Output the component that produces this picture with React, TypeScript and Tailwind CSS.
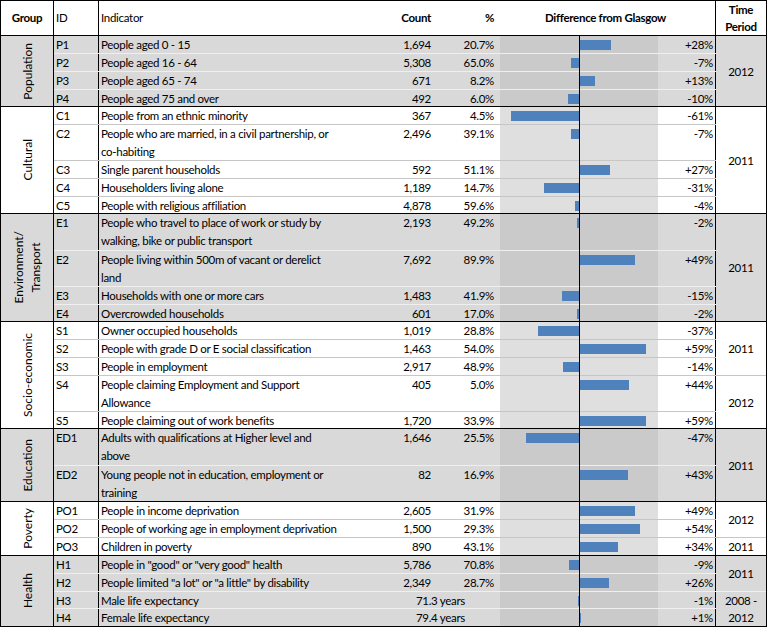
import React from "react";

type Row = {
  id: string;
  lines: string[];
  count?: string;
  pct?: string;
  combined?: string;
  diff: number;
  h: string;
};
type Sub = { time: string[]; rows: Row[] };
type Group = { label: string[]; grey: boolean; subs: Sub[] };

const groups: Group[] = [
  {
    label: ["Population"],
    grey: true,
    subs: [
      {
        time: ["2012"],
        rows: [
          { id: "P1", lines: ["People aged 0 - 15"], count: "1,694", pct: "20.7%", diff: 28, h: "h-[18px]" },
          { id: "P2", lines: ["People aged 16 - 64"], count: "5,308", pct: "65.0%", diff: -7, h: "h-[18px]" },
          { id: "P3", lines: ["People aged 65 - 74"], count: "671", pct: "8.2%", diff: 13, h: "h-[18px]" },
          { id: "P4", lines: ["People aged 75 and over"], count: "492", pct: "6.0%", diff: -10, h: "h-[17px]" },
        ],
      },
    ],
  },
  {
    label: ["Cultural"],
    grey: false,
    subs: [
      {
        time: ["2011"],
        rows: [
          { id: "C1", lines: ["People from an ethnic minority"], count: "367", pct: "4.5%", diff: -61, h: "h-[18px]" },
          { id: "C2", lines: ["People who are married, in a civil partnership, or", "co-habiting"], count: "2,496", pct: "39.1%", diff: -7, h: "h-[36px]" },
          { id: "C3", lines: ["Single parent households"], count: "592", pct: "51.1%", diff: 27, h: "h-[18px]" },
          { id: "C4", lines: ["Householders living alone"], count: "1,189", pct: "14.7%", diff: -31, h: "h-[18px]" },
          { id: "C5", lines: ["People with religious affiliation"], count: "4,878", pct: "59.6%", diff: -4, h: "h-[17px]" },
        ],
      },
    ],
  },
  {
    label: ["Environment/", "Transport"],
    grey: true,
    subs: [
      {
        time: ["2011"],
        rows: [
          { id: "E1", lines: ["People who travel to place of work or study by", "walking, bike or public transport"], count: "2,193", pct: "49.2%", diff: -2, h: "h-[37px]" },
          { id: "E2", lines: ["People living within 500m of vacant or derelict", "land"], count: "7,692", pct: "89.9%", diff: 49, h: "h-[36px]" },
          { id: "E3", lines: ["Households with one or more cars"], count: "1,483", pct: "41.9%", diff: -15, h: "h-[18px]" },
          { id: "E4", lines: ["Overcrowded households"], count: "601", pct: "17.0%", diff: -2, h: "h-[17px]" },
        ],
      },
    ],
  },
  {
    label: ["Socio-economic"],
    grey: false,
    subs: [
      {
        time: ["2011"],
        rows: [
          { id: "S1", lines: ["Owner occupied households"], count: "1,019", pct: "28.8%", diff: -37, h: "h-[18px]" },
          { id: "S2", lines: ["People with grade D or E social classification"], count: "1,463", pct: "54.0%", diff: 59, h: "h-[18px]" },
          { id: "S3", lines: ["People in employment"], count: "2,917", pct: "48.9%", diff: -14, h: "h-[18px]" },
        ],
      },
      {
        time: ["2012"],
        rows: [
          { id: "S4", lines: ["People claiming Employment and Support", "Allowance"], count: "405", pct: "5.0%", diff: 44, h: "h-[36px]" },
          { id: "S5", lines: ["People claiming out of work benefits"], count: "1,720", pct: "33.9%", diff: 59, h: "h-[17px]" },
        ],
      },
    ],
  },
  {
    label: ["Education"],
    grey: true,
    subs: [
      {
        time: ["2011"],
        rows: [
          { id: "ED1", lines: ["Adults with qualifications at Higher level and", "above"], count: "1,646", pct: "25.5%", diff: -47, h: "h-[37px]" },
          { id: "ED2", lines: ["Young people not in education, employment or", "training"], count: "82", pct: "16.9%", diff: 43, h: "h-[36px]" },
        ],
      },
    ],
  },
  {
    label: ["Poverty"],
    grey: false,
    subs: [
      {
        time: ["2012"],
        rows: [
          { id: "PO1", lines: ["People in income deprivation"], count: "2,605", pct: "31.9%", diff: 49, h: "h-[18px]" },
          { id: "PO2", lines: ["People of working age in employment deprivation"], count: "1,500", pct: "29.3%", diff: 54, h: "h-[18px]" },
        ],
      },
      {
        time: ["2011"],
        rows: [
          { id: "PO3", lines: ["Children in poverty"], count: "890", pct: "43.1%", diff: 34, h: "h-[18px]" },
        ],
      },
    ],
  },
  {
    label: ["Health"],
    grey: true,
    subs: [
      {
        time: ["2011"],
        rows: [
          { id: "H1", lines: ['People in "good" or "very good" health'], count: "5,786", pct: "70.8%", diff: -9, h: "h-[18px]" },
          { id: "H2", lines: ['People limited "a lot" or "a little" by disability'], count: "2,349", pct: "28.7%", diff: 26, h: "h-[18px]" },
        ],
      },
      {
        time: ["2008 -", "2012"],
        rows: [
          { id: "H3", lines: ["Male life expectancy"], combined: "71.3 years", diff: -1, h: "h-[17px]" },
          { id: "H4", lines: ["Female life expectancy"], combined: "79.4 years", diff: 1, h: "h-[17px]" },
        ],
      },
    ],
  },
];

const SCALE = 1.12;

function DataRow({ row, grey, borderClass }: { row: Row; grey: boolean; borderClass: string }) {
  const w = Math.max(1, Math.round(Math.abs(row.diff) * SCALE));
  const diffText = row.diff > 0 ? `+${row.diff}%` : `${row.diff}%`;
  return (
    <div className={`flex ${row.h} ${borderClass}`}>
      <div className="w-[45px] shrink-0 border-r border-black pl-[2px]">{row.id}</div>
      <div className="w-[264px] shrink-0 pl-[2px] whitespace-nowrap">
        {row.lines.map((l, i) => (
          <div key={i}>{l}</div>
        ))}
      </div>
      {row.combined ? (
        <div className="w-[137px] shrink-0 text-right pr-[35px] whitespace-nowrap">{row.combined}</div>
      ) : (
        <>
          <div className="w-[70px] shrink-0 text-right pr-[2px]">{row.count}</div>
          <div className="w-[67px] shrink-0 text-right pr-[6px]">{row.pct}</div>
        </>
      )}
      <div className={`w-[158px] shrink-0 flex ${grey ? "bg-[#cacaca]" : "bg-[#dfdfdf]"}`}>
        <div className="w-[79px] flex justify-end pt-[4px]">
          {row.diff < 0 && <div className="h-[10px] bg-[#4f81bd]" style={{ width: w }} />}
        </div>
        <div className="w-[79px] flex justify-start pt-[4px] pl-[1px]">
          {row.diff > 0 && <div className="h-[10px] bg-[#4f81bd]" style={{ width: w }} />}
        </div>
      </div>
      <div className="w-[58px] shrink-0 text-right pr-[2px] border-r border-black">{diffText}</div>
    </div>
  );
}

export default function App() {
  return (
    <div className="bg-white w-[768px] h-[630px]">
      <div className="w-[767px] border border-black font-['Lato',sans-serif] text-[11.5px] tracking-[-0.3px] leading-[18px] text-black bg-white">
        {/* header */}
        <div className="flex h-[35px] border-b border-black">
          <div className="w-[53px] shrink-0 border-r border-black flex items-center justify-center font-bold">Group</div>
          <div className="w-[45px] shrink-0 border-r border-black flex items-center pl-[2px]">ID</div>
          <div className="w-[264px] shrink-0 flex items-center pl-[2px]">Indicator</div>
          <div className="w-[70px] shrink-0 flex items-center justify-end pr-[2px] font-bold">Count</div>
          <div className="w-[67px] shrink-0 flex items-center justify-end pr-[6px] font-bold">%</div>
          <div className="w-[216px] shrink-0 border-r border-black flex items-center justify-center pr-[4px] font-bold">
            Difference from Glasgow
          </div>
          <div className="w-[50px] shrink-0 flex flex-col items-center justify-center font-bold leading-[17px]">
            <div>Time</div>
            <div>Period</div>
          </div>
        </div>
        {/* body */}
        <div className="relative">
          {groups.map((g, gi) => {
            const lastGroup = gi === groups.length - 1;
            const groupBorder = lastGroup ? "" : "border-b border-black";
            return (
              <div key={gi} className={`flex ${g.grey ? "bg-[#d9d9d9]" : "bg-white"}`}>
                <div className={`w-[53px] shrink-0 border-r border-black flex items-center justify-center ${groupBorder}`}>
                  <div className="[writing-mode:vertical-rl] rotate-180 text-center leading-[17px] text-[12px] tracking-normal">
                    {g.label.map((l, i) => (
                      <div key={i}>{l}</div>
                    ))}
                  </div>
                </div>
                <div className="flex flex-col">
                  {g.subs.map((s, si) => {
                    const lastSub = si === g.subs.length - 1;
                    const timeBorder = lastSub
                      ? groupBorder
                      : `border-b ${g.grey ? "border-[#efefef]" : "border-[#c6c6c6]"}`;
                    return (
                      <div key={si} className="flex">
                        <div className="flex flex-col">
                          {s.rows.map((r, ri) => {
                            const lastRow = ri === s.rows.length - 1;
                            let bc: string;
                            if (lastRow && lastSub) bc = groupBorder;
                            else bc = `border-b ${g.grey ? "border-[#efefef]" : "border-[#c6c6c6]"}`;
                            return <DataRow key={ri} row={r} grey={g.grey} borderClass={bc} />;
                          })}
                        </div>
                        <div className={`w-[50px] shrink-0 flex flex-col items-center justify-center leading-[17px] ${timeBorder}`}>
                          {s.time.map((t, ti) => (
                            <div key={ti}>{t}</div>
                          ))}
                        </div>
                      </div>
                    );
                  })}
                </div>
              </div>
            );
          })}
          <div className="absolute top-0 bottom-0 left-[578px] w-px bg-black" />
        </div>
      </div>
    </div>
  );
}
